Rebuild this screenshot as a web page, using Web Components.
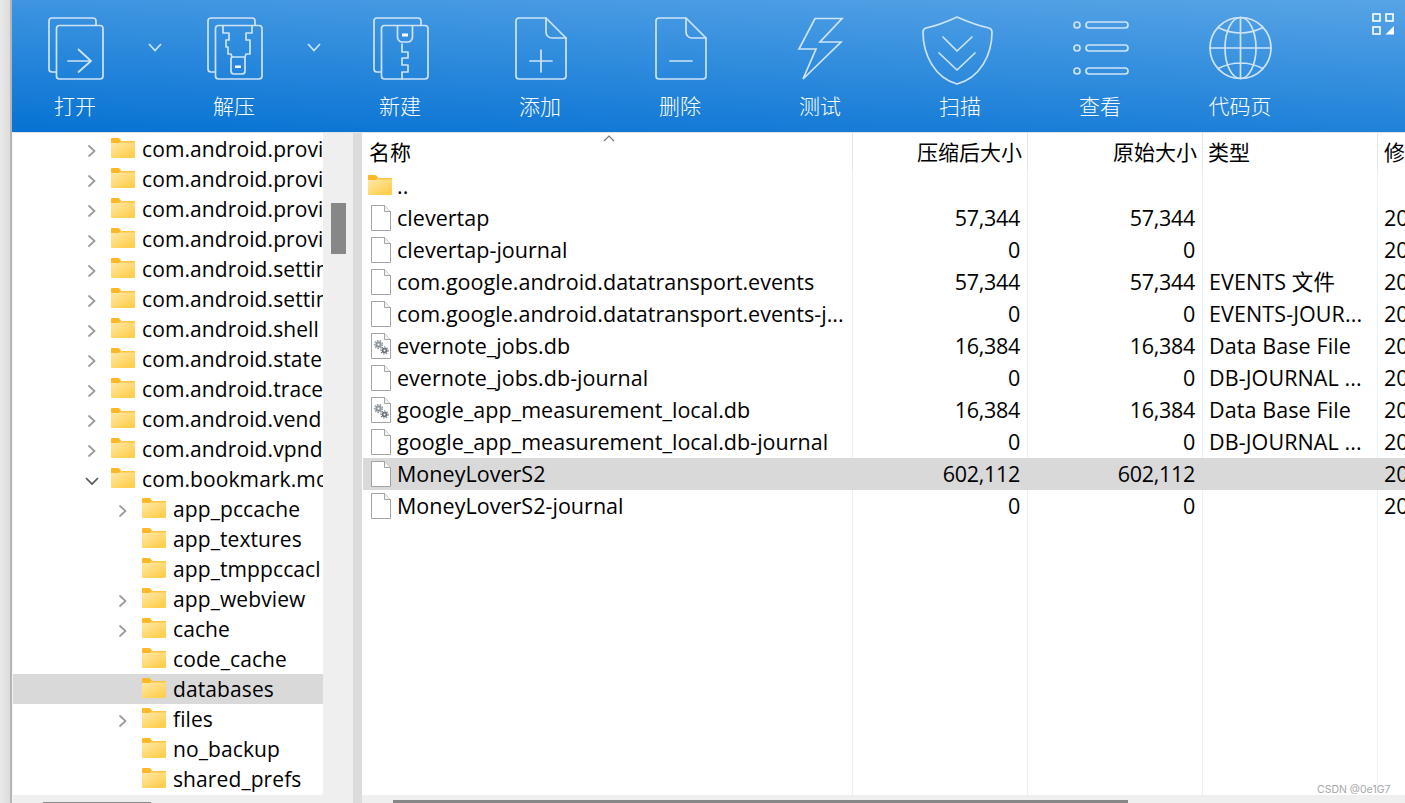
<!DOCTYPE html>
<html lang="zh">
<head>
<meta charset="utf-8">
<title>解压</title>
<style>
  html, body { margin: 0; height: 803px; overflow: hidden; background: #fff; }
  body { font-family: "Open Sans", "Noto Sans CJK SC", sans-serif; }
</style>
</head>
<body>
<zip-window></zip-window>
<script>
'use strict';

const UI_FONT = '"Open Sans", "Noto Sans CJK SC", sans-serif';

const TOOL_ICONS = {
  open: `<svg width="80" height="72" viewBox="35 14 80 72">
    <path d="M56 72h-4a3 3 0 0 1-3-3V21a3 3 0 0 1 3-3h41a3 3 0 0 1 3 3v4"/>
    <rect x="56.5" y="25.5" width="46.5" height="53.5" rx="3"/>
    <path d="M68 61h23M78.5 49.5 91 61 78.5 72"/></svg>`,
  extract: `<svg width="80" height="72" viewBox="194 14 80 72">
    <path d="M215 72h-4a3 3 0 0 1-3-3V21a3 3 0 0 1 3-3h41a3 3 0 0 1 3 3v4"/>
    <rect x="215.500" y="25.500" width="46.500" height="53.500" rx="3"/>
    <path d="M223 26v7h6v7h-3v7h2v7h3l1 3M252 26v7h-6v7h4v14h-4l-1 3"/>
    <path d="M231 59a2 2 0 0 1 2-2h10a2 2 0 0 1 2 2v12a3 3 0 0 1-3 3h-8a3 3 0 0 1-3-3z"/>
    <rect x="235" y="65.500" width="6" height="2.500" fill="#fff" stroke="none"/></svg>`,
  create: `<svg width="80" height="72" viewBox="360 14 80 72">
    <path d="M381 72h-4a3 3 0 0 1-3-3V21a3 3 0 0 1 3-3h41a3 3 0 0 1 3 3v4"/>
    <rect x="381.500" y="25.500" width="46.500" height="53.500" rx="3"/>
    <path d="M397.500 26v11a5 5 0 0 0 5 5h5a5 5 0 0 0 5-5V26"/>
    <rect x="402" y="33.500" width="6" height="3" fill="#fff" stroke="none"/>
    <path d="M402 44v8h6v6h-6v7h6v7h-6v7"/></svg>`,
  add: `<svg width="80" height="72" viewBox="500 14 80 72">
    <path d="M519 18h27l20 20v38a3 3 0 0 1-3 3h-44a3 3 0 0 1-3-3V21a3 3 0 0 1 3-3z"/>
    <path d="M546 18v14a6 6 0 0 0 6 6h14M530 61h22M541 50v22"/></svg>`,
  remove: `<svg width="80" height="72" viewBox="640 14 80 72">
    <path d="M659 18h27l20 20v38a3 3 0 0 1-3 3h-44a3 3 0 0 1-3-3V21a3 3 0 0 1 3-3z"/>
    <path d="M686 18v14a6 6 0 0 0 6 6h14M670 61h22"/></svg>`,
  test: `<svg width="80" height="72" viewBox="780 14 80 72">
    <path stroke-linejoin="miter" d="M815 18.500h27l-22 23.500h21l-38 37 13-30h-17z"/></svg>`,
  scan: `<svg width="80" height="72" viewBox="920 14 80 72">
    <path d="M957 17Q940 25 926 28q-3 1-3 4c0 23 12 46 34 52 23-6 35-29 35-52q0-3-3-4Q975 25 957 17z"/>
    <path d="M943 37l14 14 15-14M939 53l18 17 18-17"/></svg>`,
  view: `<svg width="80" height="72" viewBox="1060 14 80 72">
    <circle cx="1077" cy="25" r="3"/><circle cx="1077" cy="48" r="3"/><circle cx="1077" cy="71" r="3"/>
    <rect x="1086" y="22" width="42" height="6" rx="3"/>
    <rect x="1086" y="45" width="42" height="6" rx="3"/>
    <rect x="1086" y="68" width="42" height="6" rx="3"/></svg>`,
  codepage: `<svg width="80" height="72" viewBox="1200 14 80 72">
    <circle cx="1240.500" cy="48" r="30.500"/>
    <ellipse cx="1240.500" cy="48" rx="15.500" ry="30.500"/>
    <path d="M1240.500 17.500v61M1210 48h61M1218 27.500q22.500 11 45 0M1218 68.500q22.500-11 45 0"/></svg>`
};

class ToolButton extends HTMLElement {
  constructor() {
    super();
    this.attachShadow({ mode: 'open' }).innerHTML = `
      <style>
        :host { display: flex; flex-direction: column; align-items: center; width: var(--w, 140px); flex: none; padding-top: 14px; box-sizing: border-box; }
        svg { display: block; fill: none; stroke: #cfe3f6; stroke-width: 1.7; stroke-linecap: round; stroke-linejoin: round; overflow: visible; filter: blur(.35px); }
        span { display: block; margin-top: 4px; height: 30px; font: 300 21px/30px "Noto Sans CJK SC", sans-serif; color: #fff; white-space: nowrap; }
      </style>
      ${TOOL_ICONS[this.getAttribute('icon')]}
      <span>${this.getAttribute('label')}</span>`;
  }
}
customElements.define('tool-button', ToolButton);

class ToolCaret extends HTMLElement {
  constructor() {
    super();
    this.attachShadow({ mode: 'open' }).innerHTML = `
      <style>
        :host { display: block; width: 33px; flex: none; padding-top: 43px; }
        svg { display: block; margin: 0 auto; fill: none; stroke: #cfe3f6; stroke-width: 1.7; }
      </style>
      <svg width="14" height="9" viewBox="0 0 14 9"><path d="M1 1l6 6.500L13 1"/></svg>`;
  }
}
customElements.define('tool-caret', ToolCaret);

class ZipToolbar extends HTMLElement {
  constructor() {
    super();
    this.attachShadow({ mode: 'open' }).innerHTML = `
      <style>
        :host { display: flex; height: 132px; background: linear-gradient(2.4deg, #0672d3, #57a4e6); }
        .layout { margin: 13px 11px 0 auto; fill: none; stroke: #fff; stroke-width: 1.6; }
        .layout svg { display: block; }
        .tri { fill: #fff; stroke: none; }
      </style>
      <tool-button icon="open" label="打开" style="--w:126px"></tool-button>
      <tool-caret></tool-caret>
      <tool-button icon="extract" label="解压" style="--w:126px"></tool-button>
      <tool-caret></tool-caret>
      <tool-button icon="create" label="新建"></tool-button>
      <tool-button icon="add" label="添加"></tool-button>
      <tool-button icon="remove" label="删除"></tool-button>
      <tool-button icon="test" label="测试"></tool-button>
      <tool-button icon="scan" label="扫描"></tool-button>
      <tool-button icon="view" label="查看"></tool-button>
      <tool-button icon="codepage" label="代码页"></tool-button>
      <div class="layout"><svg width="22" height="22" viewBox="0 0 22 22">
        <rect x="1" y="1" width="7" height="7"/><rect x="14" y="1" width="7" height="7"/>
        <rect x="1" y="14" width="7" height="7"/><path class="tri" d="M13.500 21.500h8.500V13z"/>
      </svg></div>`;
  }
}
customElements.define('zip-toolbar', ZipToolbar);

class FolderIcon extends HTMLElement {
  constructor() {
    super();
    this.attachShadow({ mode: 'open' }).innerHTML = `
      <style>:host { display: block; width: 24px; height: 20px; flex: none; } svg { display: block; }</style>
      <svg width="24" height="20" viewBox="0 0 24 20">
        <defs><linearGradient id="f" x1="0" y1="0" x2=".6" y2="1"><stop offset="0" stop-color="#ffeebb"/><stop offset="1" stop-color="#ffcf50"/></linearGradient></defs>
        <path d="M1 0h7l2.500 3H24v16a1 1 0 0 1-1 1H1a1 1 0 0 1-1-1V1a1 1 0 0 1 1-1z" fill="url(#f)"/>
        <path d="M1 0h6.500l2.500 2.500L8 5H0V1a1 1 0 0 1 1-1z" fill="#fdb827"/>
        <path d="M10 3h14v1.500H9z" fill="#fdc440"/>
      </svg>`;
  }
}
customElements.define('folder-icon', FolderIcon);

class FileIcon extends HTMLElement {
  constructor() {
    super();
    const gears = this.hasAttribute('gears') ? `
      <g fill="#8f979e"><circle cx="7.500" cy="11.500" r="3.200"/><circle cx="13.500" cy="17.500" r="2.800" fill="#6d7278"/></g>
      <g fill="none" stroke="#8f979e" stroke-width="1.300" stroke-dasharray="1.500 1.300"><circle cx="7.500" cy="11.500" r="4"/></g>
      <g fill="none" stroke="#6d7278" stroke-width="1.200" stroke-dasharray="1.400 1.200"><circle cx="13.500" cy="17.500" r="3.500"/></g>
      <circle cx="7.500" cy="11.500" r="1.100" fill="#fff"/><circle cx="13.500" cy="17.500" r="1" fill="#fff"/>` : '';
    this.attachShadow({ mode: 'open' }).innerHTML = `
      <style>:host { display: block; width: 20px; height: 26px; flex: none; } svg { display: block; }</style>
      <svg width="20" height="26" viewBox="0 0 20 26">
        <path d="M.5.500h13l6 6v19H.500z" fill="#fff" stroke="#a3a3a3"/>
        <path d="M13.500.500v6h6" fill="#f4f4f4" stroke="#a3a3a3"/>${gears}
      </svg>`;
  }
}
customElements.define('file-icon', FileIcon);

class TreeRow extends HTMLElement {
  constructor() {
    super();
    const lvl = Number(this.getAttribute('level'));
    const state = this.getAttribute('state');
    let caret = '';
    if (state === 'closed') caret = '<svg width="20" height="14" viewBox="0 0 20 14"><path d="M6.500 1.500l6 5.500-6 5.500" stroke="#9a9a9a"/></svg>';
    if (state === 'open') caret = '<svg width="20" height="14" viewBox="0 0 20 14"><path d="M4 4l6 6 6-6" stroke="#555"/></svg>';
    this.attachShadow({ mode: 'open' }).innerHTML = `
      <style>
        :host { display: flex; align-items: center; height: 30px; padding-left: ${69 + (lvl - 1) * 31}px; box-sizing: border-box; white-space: nowrap; overflow: hidden; }
        :host([selected]) { background: #d9d9d9; }
        .caret { width: 20px; height: 14px; margin-top: 3px; flex: none; }
        svg { display: block; fill: none; stroke-width: 1.700; }
        folder-icon { margin: -3px 0 0 9px; }
        span { margin-left: 7px; font: 21px/30px ${UI_FONT}; color: #000; letter-spacing: .1px; }
      </style>
      <div class="caret">${caret}</div><folder-icon></folder-icon><span><slot></slot></span>`;
  }
}
customElements.define('tree-row', TreeRow);

class TreePane extends HTMLElement {
  constructor() {
    super();
    this.attachShadow({ mode: 'open' }).innerHTML = `
      <style>
        :host { display: grid; grid-template-columns: 310px 30px; grid-template-rows: 662px 8px; width: 340px; flex: none; background: #efefef; }
        .rows { background: #fff; overflow: hidden; padding-top: 1px; box-sizing: border-box; border-bottom-right-radius: 3px; }
        .vbar { padding: 70px 0 0 8px; }
        .vbar div { width: 15px; height: 51px; background: #878787; }
        .hbar { grid-column: 1 / 3; padding: 7px 0 0 30px; overflow: hidden; }
        .hbar div { width: 108px; height: 1px; background: #878787; }
      </style>
      <div class="rows"><slot></slot></div>
      <div class="vbar"><div></div></div>
      <div class="hbar"><div></div></div>`;
  }
}
customElements.define('tree-pane', TreePane);

class ListHeader extends HTMLElement {
  constructor() {
    super();
    this.attachShadow({ mode: 'open' }).innerHTML = `
      <style>
        :host { display: grid; grid-template-columns: 490px 175px 175px 175px 1fr; height: 37px; background: #fff; position: relative; font: 21px/37px "Noto Sans CJK SC", sans-serif; color: #000; }
        div { box-shadow: inset -1px 0 0 #e5e5e5; padding: 0 6px 0 5px; white-space: nowrap; overflow: hidden; }
        .num { text-align: right; }
        .arrow { position: absolute; left: 240px; top: 2px; width: 12px; height: 7px; padding: 0; box-shadow: none; }
        svg { display: block; fill: none; stroke: #777; stroke-width: 1.200; }
      </style>
      <div style="padding-left:6px">名称</div><div class="num">压缩后大小</div><div class="num">原始大小</div><div>类型</div><div style="box-shadow:none;padding-left:6px">修</div>
      <div class="arrow"><svg width="12" height="7" viewBox="0 0 12 7"><path d="M1 6l5-5 5 5"/></svg></div>`;
  }
}
customElements.define('list-header', ListHeader);

class FileRow extends HTMLElement {
  constructor() {
    super();
    const kind = this.getAttribute('kind') || 'file';
    let icon = '<file-icon></file-icon>';
    if (kind === 'gears') icon = '<file-icon gears></file-icon>';
    if (kind === 'folder') icon = '<folder-icon class="up"></folder-icon>';
    const a = n => this.getAttribute(n) || '';
    this.attachShadow({ mode: 'open' }).innerHTML = `
      <style>
        :host { display: grid; grid-template-columns: 490px 175px 175px 175px 1fr; height: 32px; align-items: center; font: 21.500px/32px ${UI_FONT}; color: #000; white-space: nowrap; }
        :host([selected]) { background: #d9d9d9; }
        div { overflow: hidden; }
        .name { display: flex; align-items: center; padding-left: 8px; letter-spacing: .03px; }
        .name span { margin-left: 6px; }
        .up { margin: -2px -1px 0 -3px; }
        .num { text-align: right; padding-right: 8px; letter-spacing: -.3px; }
        .type { padding-left: 6px; letter-spacing: .1px; }
        .date { padding-left: 6px; }
      </style>
      <div class="name">${icon}<span><slot></slot></span></div>
      <div class="num">${a('packed')}</div>
      <div class="num">${a('size')}</div>
      <div class="type">${a('type')}</div>
      <div class="date">${a('date')}</div>`;
  }
}
customElements.define('file-row', FileRow);

class FileList extends HTMLElement {
  constructor() {
    super();
    this.attachShadow({ mode: 'open' }).innerHTML = `
      <style>
        :host { display: flex; flex-direction: column; flex: 1; min-width: 0; background: #fff; }
        .body { flex: 1; overflow: hidden; padding-left: 1px;
          background:
            linear-gradient(#e7f0f9, #e7f0f9) 490px 0 / 1px 100% no-repeat,
            linear-gradient(#e7f0f9, #e7f0f9) 665px 0 / 1px 100% no-repeat,
            linear-gradient(#e7f0f9, #e7f0f9) 840px 0 / 1px 100% no-repeat,
            linear-gradient(#e7f0f9, #e7f0f9) 1015px 0 / 1px 100% no-repeat; }
        list-header { margin-left: 1px; }
        .hbar { height: 8px; background: #efefef; padding: 5px 0 0 31px; box-sizing: border-box; }
        .hbar div { width: 735px; height: 3px; background: #878787; }
      </style>
      <list-header></list-header>
      <div class="body"><slot></slot></div>
      <div class="hbar"><div></div></div>`;
  }
}
customElements.define('file-list', FileList);

class ZipWindow extends HTMLElement {
  constructor() {
    super();
    const tree = [
      ['com.android.provi', 1, 'closed'], ['com.android.provi', 1, 'closed'], ['com.android.provi', 1, 'closed'],
      ['com.android.provi', 1, 'closed'], ['com.android.settin', 1, 'closed'], ['com.android.settin', 1, 'closed'],
      ['com.android.shell', 1, 'closed'], ['com.android.state', 1, 'closed'], ['com.android.trace', 1, 'closed'],
      ['com.android.vend', 1, 'closed'], ['com.android.vpnd', 1, 'closed'], ['com.bookmark.mo', 1, 'open'],
      ['app_pccache', 2, 'closed'], ['app_textures', 2, ''], ['app_tmppccacl', 2, ''], ['app_webview', 2, 'closed'],
      ['cache', 2, 'closed'], ['code_cache', 2, ''], ['databases', 2, '', true], ['files', 2, 'closed'],
      ['no_backup', 2, ''], ['shared_prefs', 2, '']
    ].map(([t, l, s, sel]) => `<tree-row level="${l}" state="${s}"${sel ? ' selected' : ''}>${t}</tree-row>`).join('');
    const files = [
      ['..', 'folder', '', '', '', ''],
      ['clevertap', 'file', '57,344', '57,344', '', '20'],
      ['clevertap-journal', 'file', '0', '0', '', '20'],
      ['com.google.android.datatransport.events', 'file', '57,344', '57,344', 'EVENTS 文件', '20'],
      ['com.google.android.datatransport.events-j...', 'file', '0', '0', 'EVENTS-JOUR...', '20'],
      ['evernote_jobs.db', 'gears', '16,384', '16,384', 'Data Base File', '20'],
      ['evernote_jobs.db-journal', 'file', '0', '0', 'DB-JOURNAL ...', '20'],
      ['google_app_measurement_local.db', 'gears', '16,384', '16,384', 'Data Base File', '20'],
      ['google_app_measurement_local.db-journal', 'file', '0', '0', 'DB-JOURNAL ...', '20'],
      ['MoneyLoverS2', 'file', '602,112', '602,112', '', '20', true],
      ['MoneyLoverS2-journal', 'file', '0', '0', '', '20']
    ].map(([n, k, p, s, t, d, sel]) => `<file-row kind="${k}" packed="${p}" size="${s}" type="${t}" date="${d}"${sel ? ' selected' : ''}>${n}</file-row>`).join('');
    this.attachShadow({ mode: 'open' }).innerHTML = `
      <style>
        :host { display: flex; width: 1405px; height: 803px; position: relative; overflow: hidden; }
        .edge { width: 13px; flex: none; background: linear-gradient(90deg, #e9e9e9 0, #dcdcdc 10px, #b5b5b5 10px, #b5b5b5 12px, #f4f4f4 12px); }
        .main { flex: 1; min-width: 0; display: flex; flex-direction: column; }
        zip-toolbar { margin-left: -1px; }
        .panes { flex: 1; display: flex; min-height: 0; border-top: 1px solid #e2e2e2; }
        .split { width: 9px; flex: none; background: #dcdcdc; }
        .mark { position: absolute; left: 1317px; top: 783px; font: 10.500px/13px "Inter", "Liberation Sans", sans-serif; color: #a8a8a8; white-space: nowrap; }
      </style>
      <div class="edge"></div>
      <div class="main">
        <zip-toolbar></zip-toolbar>
        <div class="panes">
          <tree-pane>${tree}</tree-pane>
          <div class="split"></div>
          <file-list>${files}</file-list>
        </div>
      </div>
      <div class="mark">CSDN @0e1G7</div>`;
  }
}
customElements.define('zip-window', ZipWindow);
</script>
</body>
</html>
